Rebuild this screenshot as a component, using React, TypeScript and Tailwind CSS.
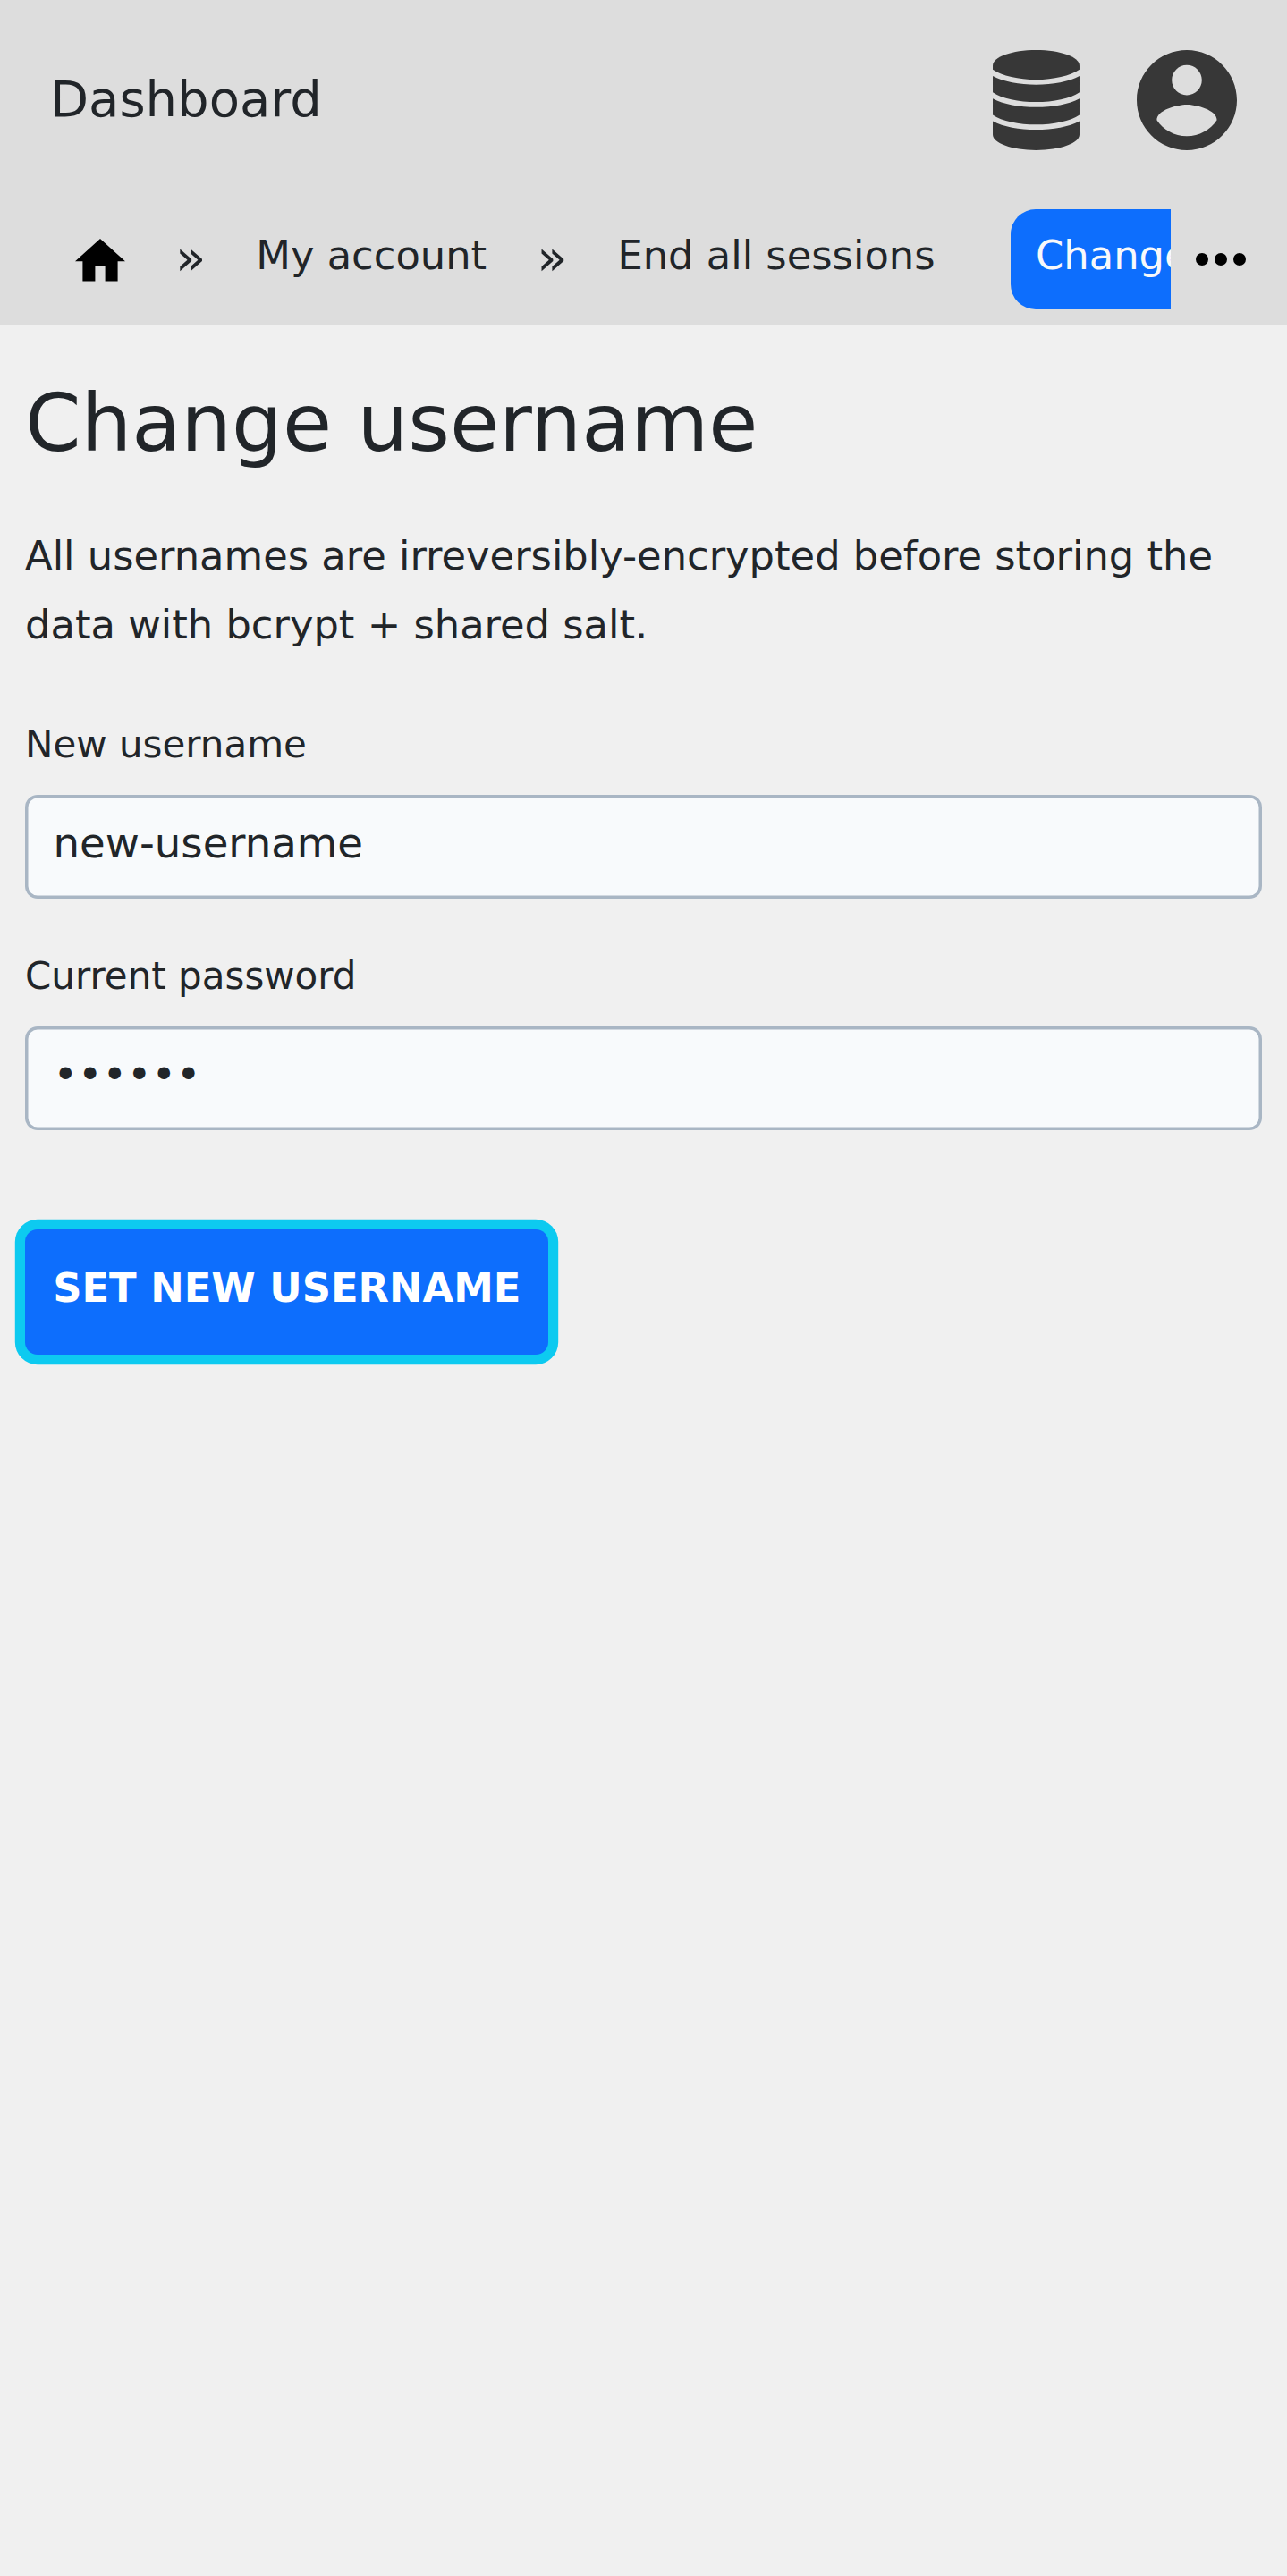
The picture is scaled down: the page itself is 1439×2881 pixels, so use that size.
import React from "react";

function DatabaseIcon() {
  return (
    <svg viewBox="90.5 108 290 335" className="block h-[112px] w-[97px]" fill="#373737">
      <path d="M90.5 160C90.5 131 155 108 235.5 108S380.5 131 380.5 160V173C350 194 293 207 235.5 207S120 194 90.5 173Z" />
      <path d="M90.5 195C125 214 180 224 235.5 224S346 214 380.5 195V249C350 270 293 281.5 235.5 281.5S120 270 90.5 249Z" />
      <path d="M90.5 270C125 289 180 299 235.5 299S346 289 380.5 270V324.5C350 345.5 293 357 235.5 357S120 345.5 90.5 324.5Z" />
      <path d="M90.5 345.5C125 364.5 180 374.5 235.5 374.5S346 364.5 380.5 345.5V391C380.5 420 316 443 235.5 443S90.5 420 90.5 391Z" />
    </svg>
  );
}

function AccountIcon() {
  return (
    <svg viewBox="2 2 20 20" className="block size-[112px]" fill="#373737">
      <path d="M12 2C6.48 2 2 6.48 2 12s4.48 10 10 10 10-4.48 10-10S17.52 2 12 2zm0 3c1.66 0 3 1.34 3 3s-1.34 3-3 3-3-1.34-3-3 1.34-3 3-3zm0 14.2c-2.5 0-4.71-1.28-6-3.22.03-1.99 4-3.08 6-3.08 1.99 0 5.97 1.09 6 3.08-1.29 1.94-3.5 3.22-6 3.22z" />
    </svg>
  );
}

function HomeIcon() {
  return (
    <svg viewBox="2 3 20 17" className="mt-[33px] block h-[47.6px] w-14 shrink-0">
      <path d="M10 20v-6h4v6h5v-8h3L12 3 2 12h3v8z" />
    </svg>
  );
}

function MoreIcon() {
  return (
    <svg viewBox="4 10 16 4" className="mt-[49px] block h-[14px] w-14 shrink-0">
      <circle cx="6" cy="12" r="2" />
      <circle cx="12" cy="12" r="2" />
      <circle cx="18" cy="12" r="2" />
    </svg>
  );
}

function Separator() {
  return <span className="text-[56px] leading-[108px]">»</span>;
}

function Field({ label, type, value }: { label: string; type: string; value: string }) {
  return (
    <label className="flex h-[259px] flex-col">
      <span className="text-[42px] leading-[72px]">{label}</span>
      <input
        type={type}
        defaultValue={value}
        className="mt-5 block h-[115.5px] w-[1382.5px] rounded-[14px] bg-[#f8fafc] px-[31.5px] pt-0 pb-2 text-[46.67px] shadow-[inset_0_0_0_3.5px_#a9b6c4] outline-none"
      />
    </label>
  );
}

export default function App() {
  return (
    <div className="min-h-[2881px] w-full bg-[#f0f0f0] font-['DejaVu_Sans',sans-serif] text-[#212529]">
      <header className="h-[364px] bg-[#dddddd]">
        <div className="flex h-56 items-start justify-between pr-[56.5px] pl-14">
          <span className="text-[56px] leading-[221px]">Dashboard</span>
          <div className="flex gap-14 pt-14">
            <div className="flex w-[112px] justify-center">
              <DatabaseIcon />
            </div>
            <AccountIcon />
          </div>
        </div>
        <nav className="flex items-start pt-[10px]">
          <div className="flex w-[1309px] items-start gap-14 overflow-hidden pl-21 text-[44.8px] leading-[103px] whitespace-nowrap">
            <HomeIcon />
            <Separator />
            <span>My account</span>
            <Separator />
            <span>End all sessions</span>
            <span className="ml-[28.5px] h-[112px] rounded-[28px] bg-[#0d6efd] px-7 text-[#f8f9fa]">Change username</span>
          </div>
          <div className="pl-7">
            <MoreIcon />
          </div>
        </nav>
      </header>
      <main className="px-7">
        <h1 className="pt-[55px] text-[89.6px] leading-[108px]">Change username</h1>
        <p className="pt-14 text-[44.8px] leading-[77px]">
          All usernames are irreversibly-encrypted before storing the data with bcrypt + shared salt.
        </p>
        <form className="pt-[60px]">
          <Field label="New username" type="text" value="new-username" />
          <Field label="Current password" type="password" value="123456" />
          <button
            type="button"
            className="mt-[60.4px] block h-[140px] w-[584.5px] rounded-[14px] bg-[#0d6efd] pr-0 pb-[9px] pl-px text-center text-[44.8px] font-bold whitespace-nowrap text-white shadow-[0_0_0_11.2px_#0dcaf0]"
          >
            SET NEW USERNAME
          </button>
        </form>
      </main>
    </div>
  );
}
